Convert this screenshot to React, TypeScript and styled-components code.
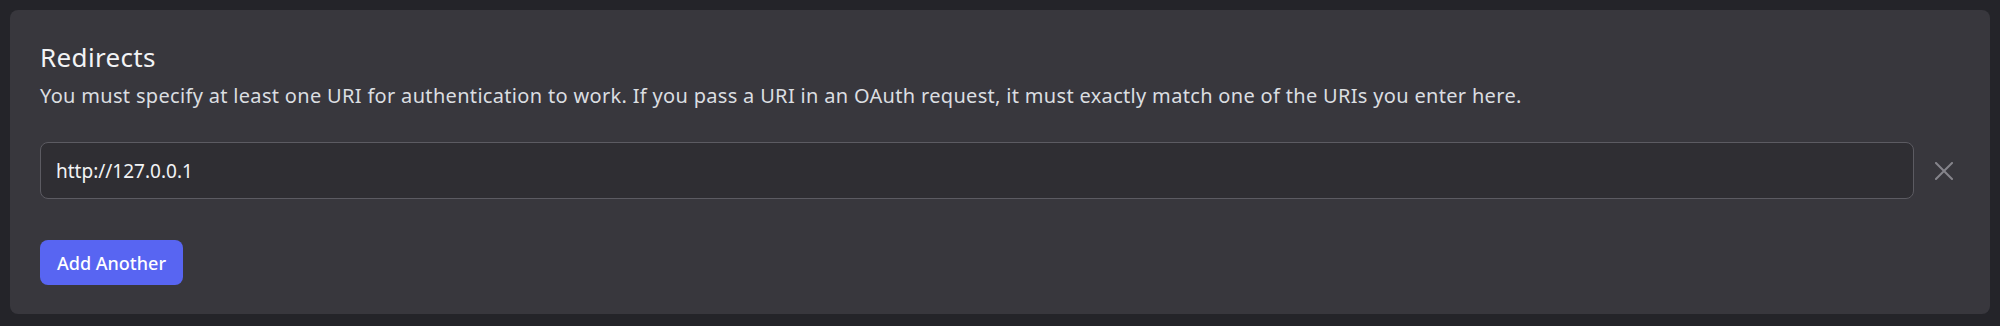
import React from "react";
import styled, { createGlobalStyle } from "styled-components";

const Global = createGlobalStyle`
  html, body { margin: 0; padding: 0; background: #242429; }
  body { font-family: "Noto Sans", "Open Sans", sans-serif; }
  * { box-sizing: border-box; }
`;

const Page = styled.div`
  padding: 10px;
  background: #242429;
  min-height: 326px;
`;

const Card = styled.section`
  background: #38373d;
  border-radius: 8px;
  height: 304px;
  padding: 31px 30px 28px 30px;
  display: flex;
  flex-direction: column;
`;

const Title = styled.h2`
  margin: 0;
  font-size: 26px;
  letter-spacing: 0.35px;
  line-height: 32px;
  font-weight: 400;
  color: #f2f3f5;
`;

const Description = styled.p`
  margin: 9px 0 0 0;
  font-size: 20px;
  letter-spacing: 0.32px;
  line-height: 28px;
  color: #dbdee1;
`;

const Row = styled.div`
  margin-top: 32px;
  display: flex;
  align-items: center;
  gap: 14px;
`;

const Input = styled.input`
  flex: 1;
  height: 57px;
  background: #2f2e33;
  border: 1px solid #5c5b62;
  border-radius: 8px;
  padding: 0 15px;
  font-family: inherit;
  font-size: 19px;
  color: #f2f3f5;
  outline: none;
`;

const RemoveButton = styled.button`
  width: 32px;
  height: 32px;
  padding: 0;
  border: none;
  background: transparent;
  display: flex;
  align-items: center;
  justify-content: center;
  color: #85848b;
  cursor: pointer;
`;

const AddButton = styled.button`
  margin-top: 41px;
  align-self: flex-start;
  height: 45px;
  padding: 0 17px;
  border: none;
  border-radius: 8px;
  background: #5865f2;
  color: #ffffff;
  font-family: inherit;
  font-size: 18px;
  font-weight: 500;
  cursor: pointer;
`;

export default function App() {
  return (
    <>
      <Global />
      <Page>
        <Card>
          <Title>Redirects</Title>
          <Description>
            You must specify at least one URI for authentication to work. If you pass a URI in an OAuth request, it must exactly match one of the URIs you enter here.
          </Description>
          <Row>
            <Input defaultValue="http://127.0.0.1" />
            <RemoveButton aria-label="Remove">
              <svg width="18" height="18" viewBox="0 0 18 18" fill="none">
                <path d="M1 1L17 17M17 1L1 17" stroke="currentColor" strokeWidth="2" strokeLinecap="square" />
              </svg>
            </RemoveButton>
          </Row>
          <AddButton>Add Another</AddButton>
        </Card>
      </Page>
    </>
  );
}
